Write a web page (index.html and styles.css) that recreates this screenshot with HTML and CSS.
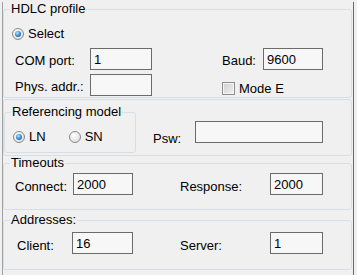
FILE: index.html
```html
<!DOCTYPE html>
<html lang="en">
<head>
    <meta charset="UTF-8">
    <title>HDLC settings</title>
    <link rel="stylesheet" href="styles.css">
</head>
<body>
    <div class="panel">
        <fieldset class="group hdlc">
            <legend>HDLC profile</legend>
            <div class="row select-row">
                <span class="radio checked"></span>
                <span class="opt-text">Select</span>
            </div>
            <div class="row com-row">
                <label class="lbl lbl-com">COM port:</label>
                <input class="field f-com" type="text" value="1">
                <label class="lbl lbl-baud">Baud:</label>
                <input class="field f-baud" type="text" value="9600">
            </div>
            <div class="row phys-row">
                <label class="lbl lbl-com">Phys. addr.:</label>
                <input class="field f-com" type="text" value="">
                <span class="check"></span>
                <span class="check-text">Mode E</span>
            </div>
        </fieldset>

        <fieldset class="group auth">
            <div class="row auth-row">
                <fieldset class="group refmodel">
                    <legend>Referencing model</legend>
                    <div class="row ref-row">
                        <span class="radio checked"></span>
                        <span class="opt-text ln-text">LN</span>
                        <span class="radio sn-radio"></span>
                        <span class="opt-text">SN</span>
                    </div>
                </fieldset>
                <label class="lbl lbl-psw">Psw:</label>
                <input class="field f-psw" type="text" value="">
            </div>
        </fieldset>

        <fieldset class="group timeouts">
            <legend>Timeouts</legend>
            <div class="row time-row">
                <label class="lbl lbl-connect">Connect:</label>
                <input class="field f-short" type="text" value="2000">
                <label class="lbl lbl-right">Response:</label>
                <input class="field f-right" type="text" value="2000">
            </div>
        </fieldset>

        <fieldset class="group addresses">
            <legend>Addresses:</legend>
            <div class="row addr-row">
                <label class="lbl lbl-client">Client:</label>
                <input class="field f-client" type="text" value="16">
                <label class="lbl lbl-right">Server:</label>
                <input class="field f-right" type="text" value="1">
            </div>
        </fieldset>
    </div>
</body>
</html>
```

FILE: styles.css
```css
body {
    margin: 0;
    background: #f0f0f0;
    font-family: 'Liberation Sans', Arial, sans-serif;
    font-size: 13px;
    color: #000000;
}
.panel {
    margin-left: 2px;
    width: 350px;
    height: 275px;
    border-left: 1px solid #a0a0a0;
    border-right: 1px solid #696969;
    box-sizing: content-box;
}
.group {
    margin: 0;
    padding: 0;
    border: 1px solid #d5dfe5;
    border-radius: 3px;
    box-sizing: border-box;
    width: 349px;
    min-width: 0;
}
.group legend {
    margin-left: 6px;
    padding: 0 1px;
    line-height: 14px;
}
.row {
    display: flex;
    align-items: center;
}
.lbl {
    flex: none;
    white-space: nowrap;
}
.field {
    flex: none;
    height: 22px;
    margin: 0;
    padding: 0 3px;
    border: 1px solid #6b6b6b;
    background: #f7f7f7;
    font-family: 'Liberation Sans', Arial, sans-serif;
    font-size: 13px;
    color: #000000;
    box-sizing: border-box;
    outline: none;
}

/* radio + checkbox, windows 7 look */
.radio {
    flex: none;
    width: 12px;
    height: 12px;
    border-radius: 50%;
    border: 1px solid #8a8a8a;
    background: radial-gradient(circle at 40% 35%, #ffffff 0%, #e6e6e6 60%, #cfcfcf 100%);
    box-sizing: border-box;
    position: relative;
}
.radio.checked::after {
    content: '';
    position: absolute;
    left: 2px;
    top: 2px;
    width: 6px;
    height: 6px;
    border-radius: 50%;
    background: radial-gradient(circle at 40% 35%, #b8e8ff 0%, #3d95e0 45%, #0d4a8c 100%);
}
.check {
    flex: none;
    width: 13px;
    height: 13px;
    border: 1px solid #8e8f8f;
    background: linear-gradient(135deg, #cfcfcf, #f2f2f2);
    box-shadow: inset 0 0 0 1px #f4f4f4;
    box-sizing: border-box;
    align-self: flex-end;
    margin-bottom: 1px;
    margin-left: 70px;
}
.check-text {
    align-self: flex-end;
    margin-left: 4px;
    line-height: 14px;
}

/* HDLC profile */
.hdlc {
    margin-top: 2px;
    height: 96px;
}
.select-row {
    margin-top: 11px;
    margin-left: 8px;
    height: 13px;
}
.opt-text {
    margin-left: 4px;
}
.com-row {
    margin-top: 8px;
    height: 22px;
    padding-left: 11px;
}
.phys-row {
    margin-top: 4px;
    height: 22px;
    padding-left: 11px;
}
.lbl-com {
    width: 75px;
    padding-top: 2px;
}
.f-com {
    width: 62px;
}
.lbl-baud {
    margin-left: 70px;
    width: 41px;
    padding-top: 2px;
}
.f-baud {
    width: 60px;
}

/* referencing model + password */
.auth {
    margin-top: 1px;
    height: 57px;
}
.auth-row {
    align-items: flex-start;
}
.refmodel {
    width: 132px;
    height: 48px;
    margin-top: 5px;
}
.ref-row {
    margin-top: 11px;
    margin-left: 8px;
    height: 13px;
}
.ln-text {
    margin-right: 23px;
}
.lbl-psw {
    margin-left: 17px;
    margin-top: 31px;
    width: 42px;
}
.f-psw {
    width: 128px;
    margin-top: 21px;
}

/* timeouts */
.timeouts {
    margin-top: 0;
    height: 54px;
}
.time-row {
    margin-top: 3px;
    padding-left: 11px;
    height: 22px;
}
.lbl-connect {
    width: 58px;
    padding-top: 4px;
}
.f-short {
    width: 60px;
}
.lbl-right {
    margin-left: 47px;
    width: 90px;
    padding-top: 5px;
}
.f-right {
    width: 53px;
}

/* addresses */
.addresses {
    margin-top: 3px;
    height: 57px;
}
.addr-row {
    margin-top: 5px;
    padding-left: 13px;
    height: 22px;
}
.lbl-client {
    width: 55px;
    padding-top: 5px;
}
.f-client {
    width: 61px;
}
```
